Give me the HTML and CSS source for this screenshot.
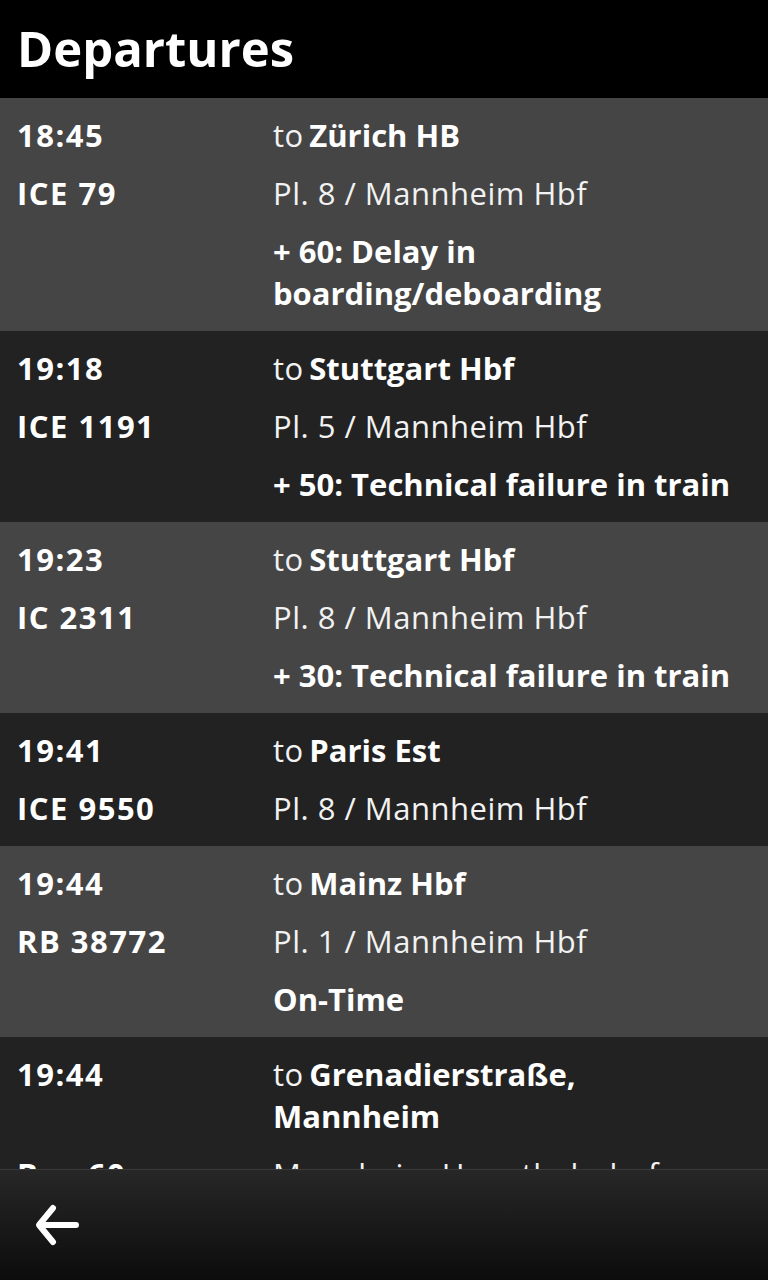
FILE: index.html
```html
<!DOCTYPE html>
<html>
<head>
<meta charset="utf-8">
<link rel="stylesheet" href="styles.css">
</head>
<body>
<div class="screen">
  <header class="title-bar"><h1 class="title">Departures</h1></header>
  <main class="list">
    <div class="row light">
      <div class="key">18:45</div><div class="val dest">to <b>Zürich HB</b></div>
      <div class="key">ICE 79</div><div class="val">Pl. 8 / Mannheim Hbf</div>
      <div class="val note">+ 60: Delay in boarding/deboarding</div>
    </div>
    <div class="row dark">
      <div class="key">19:18</div><div class="val dest">to <b>Stuttgart Hbf</b></div>
      <div class="key">ICE 1191</div><div class="val">Pl. 5 / Mannheim Hbf</div>
      <div class="val note">+ 50: Technical failure in train</div>
    </div>
    <div class="row light">
      <div class="key">19:23</div><div class="val dest">to <b>Stuttgart Hbf</b></div>
      <div class="key">IC 2311</div><div class="val">Pl. 8 / Mannheim Hbf</div>
      <div class="val note">+ 30: Technical failure in train</div>
    </div>
    <div class="row dark">
      <div class="key">19:41</div><div class="val dest">to <b>Paris Est</b></div>
      <div class="key">ICE 9550</div><div class="val">Pl. 8 / Mannheim Hbf</div>
    </div>
    <div class="row light">
      <div class="key">19:44</div><div class="val dest">to <b>Mainz Hbf</b></div>
      <div class="key">RB 38772</div><div class="val">Pl. 1 / Mannheim Hbf</div>
      <div class="val note">On-Time</div>
    </div>
    <div class="row dark">
      <div class="key">19:44</div><div class="val dest">to <b>Grenadierstraße, Mannheim</b></div>
      <div class="key">Bus 60</div><div class="val">Mannheim Hauptbahnhof</div>
    </div>
  </main>
  <footer class="action-bar">
    <svg class="back" width="48" height="44" viewBox="0 0 48 44">
      <path d="M22 5 L8 22 L22 39 M9 22 H45" fill="none" stroke="#fff" stroke-width="6" stroke-linecap="round" stroke-linejoin="round"/>
    </svg>
  </footer>
</div>
</body>
</html>
```
FILE: styles.css
```css
* { box-sizing: border-box; }
html, body { margin: 0; padding: 0; background: #222; }
body { font-family: "Open Sans", "Noto Sans", sans-serif; color: #fff; }
.screen { width: 768px; height: 1280px; position: relative; overflow: hidden; display: flex; flex-direction: column; }
.title-bar { height: 98px; background: #000; display: flex; align-items: center; padding-left: 17px; flex: none; }
.title { margin: 0; font-size: 49px; font-weight: 700; line-height: 1; padding-bottom: 2px; }
.list { flex: 1; overflow: hidden; }
.row { display: grid; grid-template-columns: 256px 1fr; row-gap: 16px; padding: 16px 28px 17px 17px; }
.row.light { background: #454545; }
.row.dark { background: #222222; }
.key, .val { font-size: 31px; line-height: 42px; }
.key { grid-column: 1; font-weight: 700; letter-spacing: 1.5px; color: #fff; }
.val { grid-column: 2; letter-spacing: 0.5px; color: #f2f2f2; }
.val b, .val.note { font-weight: 700; letter-spacing: 0; color: #fff; }
.dest { word-spacing: -3px; }
.dest b { word-spacing: 0; }
.action-bar { position: absolute; left: 0; right: 0; bottom: 0; height: 111px; border-top: 1px solid #3a3a3a; background: linear-gradient(#272727, #0c0c0c); display: flex; align-items: center; padding-left: 31px; }
.back { display: block; }
```
